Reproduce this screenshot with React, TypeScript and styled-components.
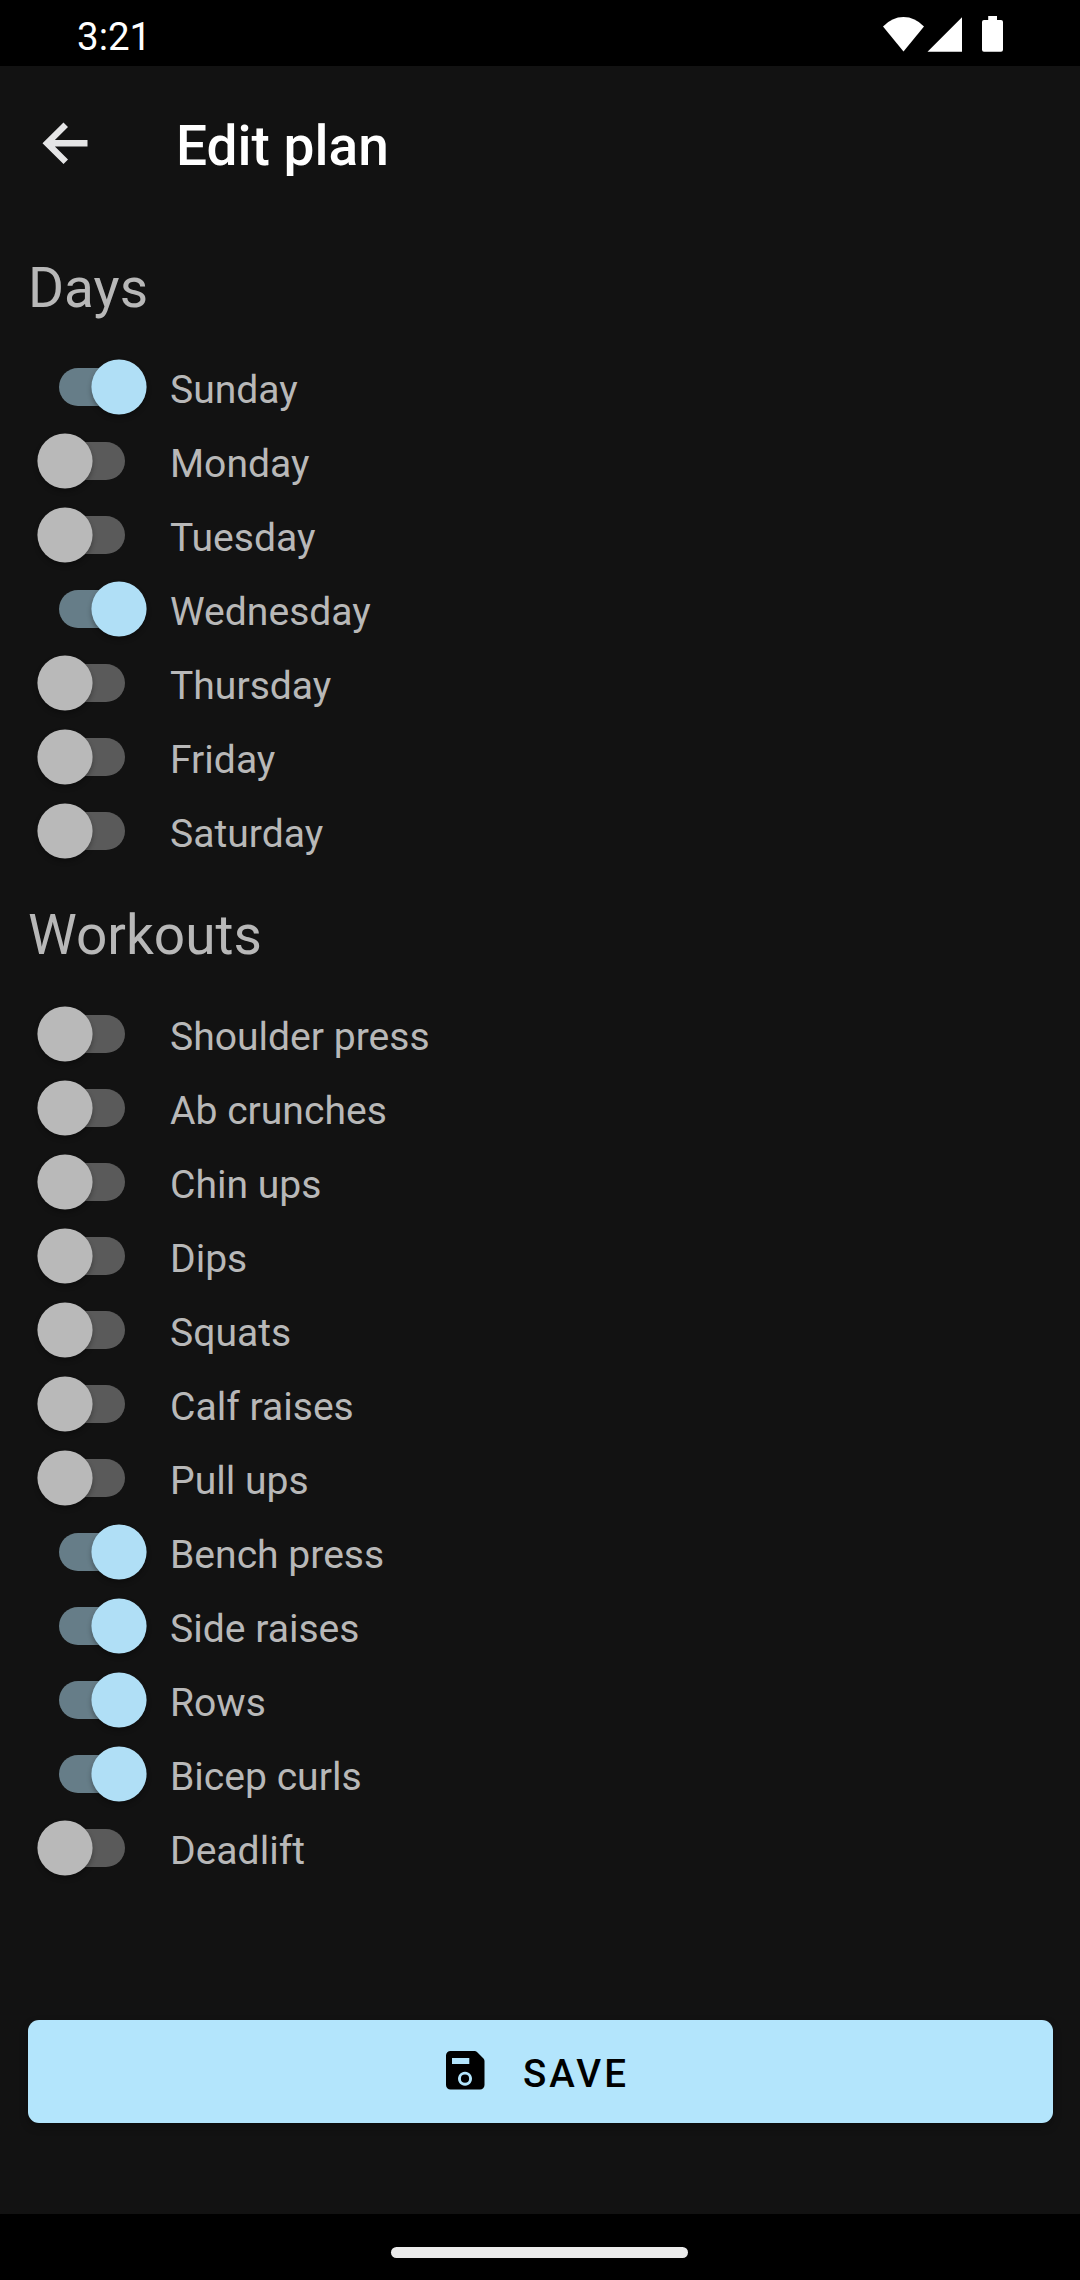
import React, { useState } from "react";
import styled, { createGlobalStyle } from "styled-components";

const GlobalStyle = createGlobalStyle`
  * { box-sizing: border-box; }
  html, body { margin: 0; padding: 0; background: #000; }
  body { font-family: Roboto, "Liberation Sans", sans-serif; }
`;

const Screen = styled.div`
  width: 1080px;
  height: 2280px;
  display: flex;
  flex-direction: column;
  background: #121212;
  overflow: hidden;
`;

const StatusBar = styled.header`
  height: 66px;
  flex: none;
  display: flex;
  justify-content: space-between;
  padding: 0 76px 0 77px;
  background: #000;
  color: #fff;
`;

const Clock = styled.span`
  padding-top: 14px;
  font-size: 38.5px;
  line-height: 45px;
`;

const StatusIcons = styled.svg`
  width: 122px;
  height: 66px;
  fill: #fff;
`;

const AppBar = styled.div`
  height: 154px;
  flex: none;
  display: flex;
  align-items: center;
  padding: 0 42px;
`;

const BackButton = styled.button`
  display: flex;
  width: 46px;
  height: 46px;
  padding: 0;
  margin: 0 88px 0 0;
  border: 0;
  background: none;
  color: #e5e5e6;
`;

const Title = styled.h1`
  margin: 5px 0 0;
  font-size: 55px;
  line-height: 64px;
  font-weight: 500;
  color: #fff;
`;

const Content = styled.main`
  flex: 1;
  display: flex;
  flex-direction: column;
  padding: 36px 27px 0 28px;
`;

const SectionTitle = styled.h2`
  margin: 0;
  height: 94px;
  font-size: 55px;
  line-height: 64px;
  font-weight: 400;
  color: #b8b8b8;
`;

const List = styled.div`
  display: flex;
  flex-direction: column;
  padding-left: 9px;
  margin-bottom: 35px;
`;

const Row = styled.div`
  display: flex;
  align-items: center;
  height: 74px;
`;

const Track = styled.button<{ $on: boolean }>`
  display: flex;
  align-items: center;
  justify-content: ${(p) => (p.$on ? "flex-end" : "flex-start")};
  width: 66px;
  height: 38px;
  margin: 0 45px 0 22px;
  padding: 0;
  border: 0;
  border-radius: 19px;
  background: ${(p) => (p.$on ? "#667d88" : "#5a5a5a")};
`;

const Thumb = styled.span<{ $on: boolean }>`
  flex: none;
  width: 56px;
  height: 56px;
  margin: 0 -22px;
  border-radius: 50%;
  background: ${(p) => (p.$on ? "#b0dff6" : "#b9b9b9")};
  box-shadow: 0 3px 5px rgba(0, 0, 0, 0.3);
  transform: scale(0.985);
`;

const Label = styled.span`
  padding-top: 6px;
  font-size: 39.1px;
  line-height: 46px;
  color: #b8b8b8;
`;

const SaveButton = styled.button`
  display: flex;
  align-items: center;
  justify-content: center;
  width: 1025px;
  height: 103px;
  margin-top: 100px;
  padding: 0 6px 0 0;
  border: 0;
  border-radius: 11px;
  background: #b3e5fc;
  box-shadow: 0 4px 8px rgba(0, 0, 0, 0.3);
  color: #000;
  font-family: inherit;
  font-size: 38.5px;
  font-weight: 500;
  letter-spacing: 3px;
  gap: 38px;
`;

const SaveIcon = styled.svg`
  width: 39px;
  height: 39px;
  margin-bottom: 2px;
`;

const SaveLabel = styled.span`
  padding-top: 3px;
`;

const NavBar = styled.footer`
  height: 66px;
  flex: none;
  display: flex;
  justify-content: center;
  padding: 33px 1px 0 0;
  background: #000;
`;

const Handle = styled.div`
  width: 297px;
  height: 11px;
  border-radius: 5.5px;
  background: #ebebeb;
`;

type Item = { name: string; on: boolean };

const item = (name: string, on = false): Item => ({ name, on });

const days = [
  item("Sunday", true),
  item("Monday"),
  item("Tuesday"),
  item("Wednesday", true),
  item("Thursday"),
  item("Friday"),
  item("Saturday"),
];

const workouts = [
  item("Shoulder press"),
  item("Ab crunches"),
  item("Chin ups"),
  item("Dips"),
  item("Squats"),
  item("Calf raises"),
  item("Pull ups"),
  item("Bench press", true),
  item("Side raises", true),
  item("Rows", true),
  item("Bicep curls", true),
  item("Deadlift"),
];

function SwitchRow({ name, on: initial }: Item) {
  const [on, setOn] = useState(initial);
  return (
    <Row>
      <Track $on={on} role="switch" aria-checked={on} onClick={() => setOn(!on)}>
        <Thumb $on={on} />
      </Track>
      <Label>{name}</Label>
    </Row>
  );
}

function Section({ title, items }: { title: string; items: Item[] }) {
  return (
    <>
      <SectionTitle>{title}</SectionTitle>
      <List>
        {items.map((i) => (
          <SwitchRow key={i.name} {...i} />
        ))}
      </List>
    </>
  );
}

export default function App() {
  return (
    <Screen>
      <GlobalStyle />
      <StatusBar>
        <Clock>3:21</Clock>
        <StatusIcons viewBox="882 0 122 66">
          <path d="M883 26.5Q892 17 903.5 17T924 26.5L903.5 51.5Z" />
          <path d="M927.5 51.7L962 17.2V51.7Z" />
          <path d="M988.2 16h8.8v4h4a2 2 0 0 1 2 2v27.7a2 2 0 0 1-2 2h-17a2 2 0 0 1-2-2V22a2 2 0 0 1 2-2h4.2z" />
        </StatusIcons>
      </StatusBar>
      <AppBar>
        <BackButton aria-label="Back">
          <svg width="46" height="46" viewBox="42 120 46 46">
            <path
              d="M42.500 143.300L63.500 122.400L68 126.900L54.900 140H87.500V146.500H54.900L68 159.600L63.500 164.100Z"
              fill="currentColor"
            />
          </svg>
        </BackButton>
        <Title>Edit plan</Title>
      </AppBar>
      <Content>
        <Section title="Days" items={days} />
        <Section title="Workouts" items={workouts} />
        <SaveButton>
          <SaveIcon viewBox="0 0 39 39">
            <path
              fillRule="evenodd"
              fill="currentColor"
              d="M4.500 0H28.500Q30 0 31 1L37.500 7.500Q38.500 8.500 38.500 10V34a4.500 4.500 0 0 1-4.500 4.500H4.500a4.500 4.500 0 0 1-4.500-4.500V4.500a4.500 4.500 0 0 1 4.500-4.500ZM6 7V13H23.300V7ZM19 20.700a7 7 0 1 0 .01 0Z"
            />
            <circle cx="19" cy="27.700" r="4.100" fill="currentColor" />
          </SaveIcon>
          <SaveLabel>SAVE</SaveLabel>
        </SaveButton>
      </Content>
      <NavBar>
        <Handle />
      </NavBar>
    </Screen>
  );
}
